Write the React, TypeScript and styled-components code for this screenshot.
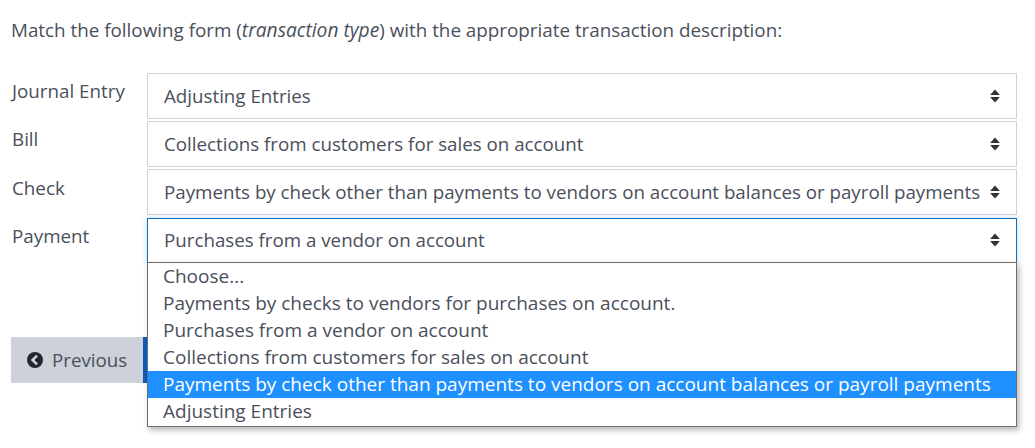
import React from "react";
import styled, { createGlobalStyle } from "styled-components";

const Global = createGlobalStyle`
  html, body { margin: 0; padding: 0; background: #fff; }
  body { font-family: "Open Sans", "Liberation Sans", sans-serif; color: #4a4f5b; }
`;
const Page = styled.div`
  position: relative;
  width: 1035px;
  height: 448px;
  overflow: hidden;
  padding: 17px 18px 0 11px;
  box-sizing: border-box;
`;
const Prompt = styled.p`
  margin: 0 0 30px;
  font-size: 18.82px;
  line-height: 26px;
  color: #4a4f5b;
  em { font-size: 19.2px; }
`;
const Rows = styled.div`
  display: flex;
  flex-direction: column;
  gap: 2px;
`;
const Row = styled.div<{ $last?: boolean }>`
  display: flex;
  align-items: flex-start;
  margin-top: ${(p) => (p.$last ? "1px" : "0")};
`;
const Label = styled.label<{ $top: number }>`
  width: 135px;
  flex: none;
  margin-left: 1px;
  font-size: 18.8px;
  line-height: 26px;
  padding-top: ${(p) => p.$top}px;
  color: #4a4f5b;
`;
const Select = styled.div<{ $focused?: boolean }>`
  position: relative;
  flex: 1;
  height: 46px;
  box-sizing: border-box;
  display: flex;
  align-items: center;
  padding: 0 36px ${(p) => (p.$focused ? "4px" : "2px")} 16px;
  border: 1px solid ${(p) => (p.$focused ? "#0a6ebd" : "#d0d3d9")};
  font-size: 18.74px;
  white-space: nowrap;
  color: #4a4f5b;
  background: #fff;
  box-shadow: ${(p) => (p.$focused ? "0 0 6px rgba(10,110,189,.25)" : "none")};
`;
const Caret = styled.svg<{ $focused?: boolean }>`
  position: absolute;
  right: 16px;
  top: 50%;
  margin-top: ${(p) => (p.$focused ? "-8px" : "-7px")};
  width: 10px;
  height: 14px;
  fill: #33363c;
`;
const Actions = styled.div`
  display: flex;
  margin-top: 73px;
`;
const Prev = styled.div`
  width: 132px;
  height: 46px;
  box-sizing: border-box;
  background: #cdd1d9;
  display: flex;
  align-items: center;
  gap: 9px;
  padding-left: 16px;
  font-size: 18.74px;
  color: #4a4f5b;
`;
const PrevText = styled.span`
  margin-bottom: 2px;
`;
const Next = styled.div`
  width: 120px;
  height: 46px;
  background: #0b5cc0;
`;
const Menu = styled.ul`
  position: absolute;
  left: 147px;
  top: 262px;
  width: 870px;
  height: 165px;
  box-sizing: border-box;
  margin: 0;
  padding: 0;
  list-style: none;
  background: #fff;
  border: 1px solid #6f6f6f;
  box-shadow: 2px 3px 6px rgba(0, 0, 0, 0.3);
`;
const Option = styled.li<{ $active?: boolean }>`
  height: 27px;
  line-height: 27px;
  padding-left: 15px;
  font-size: 19px;
  white-space: nowrap;
  color: ${(p) => (p.$active ? "#fff" : "#4a4f5b")};
  background: ${(p) => (p.$active ? "#1e90ff" : "transparent")};
`;

const Arrows = ({ focused }: { focused?: boolean }) => (
  <Caret viewBox="0 0 10 14" $focused={focused}>
    <path d="M5 0.5 L9.5 5.5 Q10 6 9 6 H1 Q0 6 0.5 5.5 Z" />
    <path d="M5 13.5 L9.5 8.5 Q10 8 9 8 H1 Q0 8 0.5 8.5 Z" />
  </Caret>
);

const ChevronCircle = () => (
  <svg width="16" height="16" viewBox="0 0 16 16">
    <circle cx="8" cy="8" r="8" fill="#23262b" />
    <path d="M10 3.6 L5.6 8 L10 12.4" fill="none" stroke="#cdd1d9" strokeWidth="2.6" />
  </svg>
);

const rows = [
  { label: "Journal Entry", value: "Adjusting Entries", labelTop: 5 },
  { label: "Bill", value: "Collections from customers for sales on account", labelTop: 5 },
  { label: "Check", value: "Payments by check other than payments to vendors on account balances or payroll payments", labelTop: 6 },
  { label: "Payment", value: "Purchases from a vendor on account", labelTop: 5, focused: true },
];

const options = [
  "Choose...",
  "Payments by checks to vendors for purchases on account.",
  "Purchases from a vendor on account",
  "Collections from customers for sales on account",
  "Payments by check other than payments to vendors on account balances or payroll payments",
  "Adjusting Entries",
];

export default function App() {
  return (
    <Page>
      <Global />
      <Prompt>
        Match the following form (<em>transaction type</em>) with the appropriate transaction description:
      </Prompt>
      <Rows>
        {rows.map((r) => (
          <Row key={r.label} $last={r.focused}>
            <Label $top={r.labelTop}>{r.label}</Label>
            <Select $focused={r.focused}>
              {r.value}
              <Arrows focused={r.focused} />
            </Select>
          </Row>
        ))}
      </Rows>
      <Actions>
        <Prev>
          <ChevronCircle />
          <PrevText>Previous</PrevText>
        </Prev>
        <Next />
      </Actions>
      <Menu>
        {options.map((o, i) => (
          <Option key={o} $active={i === 4}>
            {o}
          </Option>
        ))}
      </Menu>
    </Page>
  );
}
